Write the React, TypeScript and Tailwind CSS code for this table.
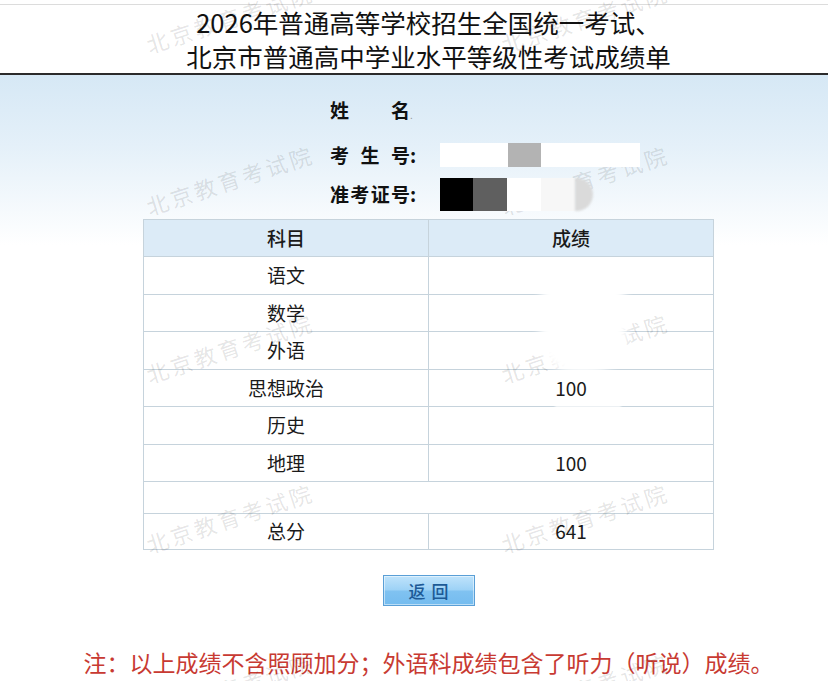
const marks = [
  'left-[150px] top-[33px]',
  'left-[505px] top-[33px]',
  'left-[150px] top-[195px]',
  'left-[505px] top-[195px]',
  'left-[150px] top-[363px]',
  'left-[505px] top-[363px]',
  'left-[150px] top-[533px]',
  'left-[505px] top-[533px]',
  'left-[150px] top-[703px]',
  'left-[505px] top-[703px]',
]

const rows = [
  { subject: '语文', score: '' },
  { subject: '数学', score: '' },
  { subject: '外语', score: '' },
  { subject: '思想政治', score: '100' },
  { subject: '历史', score: '' },
  { subject: '地理', score: '100' },
]

const cell = 'border border-[#c6d3dc] text-center align-middle'

const App = () => {
  return (
    <div className="relative w-[828px] h-[681px] overflow-hidden bg-white text-[#1a1a1a] font-['Noto_Sans_CJK_SC','Noto_Sans',sans-serif]">
      {/* header */}
      <header className="pt-[4px] border-b-2 border-[#2b2b2b]">
        <div className="border-t border-[#dcdcdc] pl-[29px] text-center text-[25.5px] leading-[34px] text-[#111]">
          <div>2026年普通高等学校招生全国统一考试、</div>
          <div>北京市普通高中学业水平等级性考试成绩单</div>
        </div>
      </header>

      <main className="pt-[18px] bg-[linear-gradient(180deg,#d6e8f5_0px,#e4f0f9_70px,#ffffff_170px)]">
        {/* info */}
        <div className="pl-[330px] text-[19px] font-bold text-[#111]">
          <div className="flex items-center h-[34px]">
            <div className="flex justify-between w-[80px]">
              <span>姓</span>
              <span>名</span>
            </div>
            <span className="text-[10px] text-[#999] font-normal mt-[8px]">.</span>
          </div>

          <div className="flex items-center h-[24px] mt-[16px]">
            <div className="flex justify-between w-[80px]">
              <span>考</span>
              <span>生</span>
              <span>号</span>
            </div>
            <span className="w-[10px]">:</span>
            <div className="relative z-20 flex ml-[20px] h-[24px] blur-[0.6px]">
              <div className="w-[68px] bg-white" />
              <div className="w-[33px] bg-[#b3b3b3]" />
              <div className="w-[99px] bg-white" />
            </div>
          </div>

          <div className="flex items-center h-[33px] mt-[11px]">
            <div className="flex justify-between w-[80px]">
              <span>准</span>
              <span>考</span>
              <span>证</span>
              <span>号</span>
            </div>
            <span className="w-[10px]">:</span>
            <div className="relative z-20 flex ml-[20px] h-[33px] blur-[0.6px]">
              <div className="w-[33px] bg-black" />
              <div className="w-[34px] bg-[#5f5f5f]" />
              <div className="w-[34px] bg-white" />
              <div className="w-[34px] bg-[#f7f7f7]" />
              <div className="w-[18px] rounded-r-full bg-[#dadada] blur-[1px]" />
            </div>
          </div>
        </div>

        {/* score table */}
        <div className="pl-[29px] mt-[8px]">
          <div className="relative w-[571px] mx-auto">
            <table className="w-full border-collapse table-fixed text-[19px] text-[#1a1a1a]">
              <thead>
                <tr className="h-[37px] bg-[#dcebf7]">
                  <th className={`${cell} font-medium`}>科目</th>
                  <th className={`${cell} font-medium`}>成绩</th>
                </tr>
              </thead>
              <tbody className="bg-white">
                {rows.map((r) => (
                  <tr key={r.subject} className="h-[37.5px]">
                    <td className={cell}>{r.subject}</td>
                    <td className={cell}>{r.score}</td>
                  </tr>
                ))}
                <tr className="h-[32px]">
                  <td className={cell} colSpan={2}></td>
                </tr>
                <tr className="h-[36px]">
                  <td className={cell}>总分</td>
                  <td className={cell}>641</td>
                </tr>
              </tbody>
            </table>
            {/* blurred-out scores */}
            <div className="absolute z-20 left-[397px] top-[48px] w-[86px] h-[106px] rounded-[36px] bg-white blur-[4px]" />
            <div className="absolute z-20 left-[412px] top-[184px] w-[66px] h-[4px] bg-white blur-[1px]" />
          </div>
        </div>

        {/* back button */}
        <div className="pl-[29px] mt-[25px] flex justify-center">
          <button className="w-[92px] h-[31px] border border-[#5a9fd6] bg-[linear-gradient(180deg,#bfe3fb_0%,#9dd2f6_48%,#80c2f1_52%,#74bcef_100%)] text-[17px] font-medium tracking-[6px] pl-[6px] text-[#1d5a96] shadow-[inset_0_0_0_1px_rgba(255,255,255,0.5)]">
            返回
          </button>
        </div>

        {/* note */}
        <p className="pl-[29px] mt-[41px] text-center text-[23px] leading-[30px] text-[#c83a32] whitespace-nowrap">
          注：以上成绩不含照顾加分；外语科成绩包含了听力（听说）成绩。
        </p>
      </main>

      {/* watermarks */}
      {marks.map((m) => (
        <span
          key={m}
          className={`absolute z-10 ${m} origin-bottom-left -rotate-[18deg] pointer-events-none whitespace-nowrap text-[22px] leading-[22px] tracking-[3px] text-black/[0.11]`}
        >
          北京教育考试院
        </span>
      ))}
    </div>
  )
}

export default App
